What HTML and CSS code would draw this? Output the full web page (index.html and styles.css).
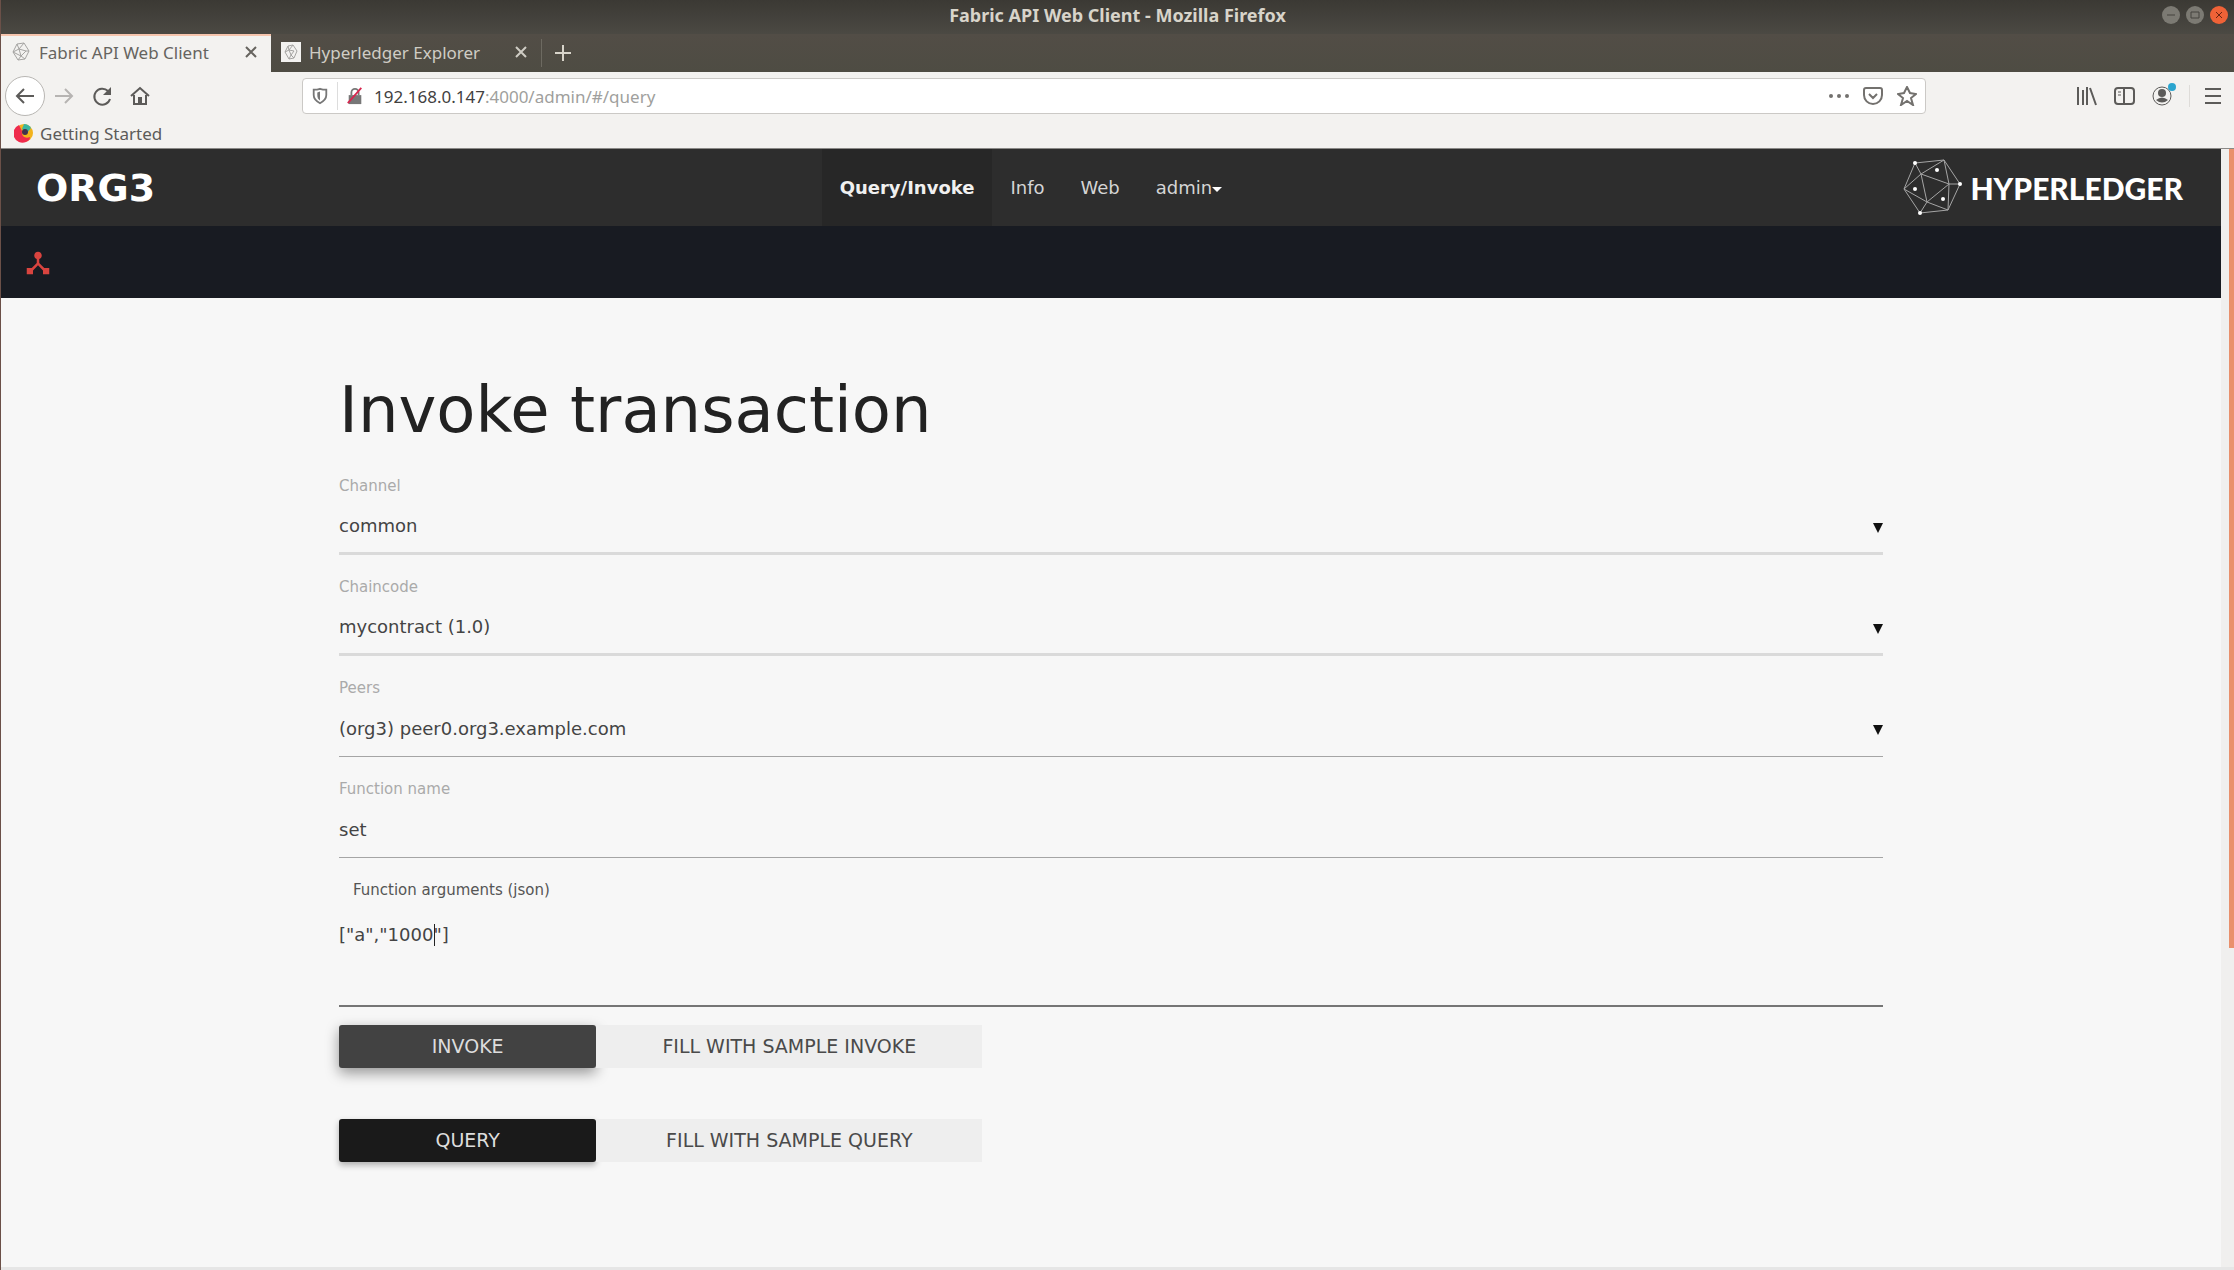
FILE: index.html
```html
<!doctype html>
<html lang="en">
<head>
    <meta charset="UTF-8">
    <meta name="viewport" content="width=device-width, initial-scale=1">
    <title>Fabric API Web Client</title>
    <link rel="stylesheet" href="styles.css">
</head>
<body>
<!-- browser window -->
<header class="window">
    <div class="titlebar">
        <span class="window-title">Fabric API Web Client - Mozilla Firefox</span>
        <div class="window-buttons">
            <button class="win-btn" aria-label="Minimize"><svg viewBox="0 0 18 18"><path d="M5 9h8"/></svg></button>
            <button class="win-btn" aria-label="Maximize"><svg viewBox="0 0 18 18"><path d="M5 6h8v6H5z"/></svg></button>
            <button class="win-btn win-close" aria-label="Close"><svg viewBox="0 0 18 18"><path d="M6 6l6 6M12 6l-6 6"/></svg></button>
        </div>
    </div>
    <div class="tabs">
        <div class="tab tab-active">
            <svg class="favicon" viewBox="0 0 20 20"><path d="M6 2l7-1 5 8-4 8-7 1-5-8zM6 2l2 5-6 3M13 1l-5 6 7 2-5 5-2-7M18 9h-3M10 14l-3 4M10 14l4 3M2 10l8 4"/></svg>
            <span class="tab-text">Fabric API Web Client</span>
            <button class="tab-btn" aria-label="Close tab"><svg viewBox="0 0 14 14"><path d="M2 2l10 10M12 2L2 12"/></svg></button>
        </div>
        <div class="tab">
            <svg class="favicon favicon-box" viewBox="0 0 20 20"><path d="M7 4l5-1 4 6-3 7-5 1-4-7zM7 4l1 4-4 2M12 3L8 8l5 1-3 4-2-5M10 13l-2 4M10 13l3 3"/></svg>
            <span class="tab-text">Hyperledger Explorer</span>
            <button class="tab-btn" aria-label="Close tab"><svg viewBox="0 0 14 14"><path d="M2 2l10 10M12 2L2 12"/></svg></button>
        </div>
        <button class="new-tab" aria-label="New tab"><svg viewBox="0 0 18 18"><path d="M9 1v16M1 9h16"/></svg></button>
    </div>
    <div class="toolbar">
        <div class="nav-buttons">
            <button class="back" aria-label="Back"><svg viewBox="0 0 22 22"><path d="M20 11H3M10 4l-7 7 7 7"/></svg></button>
            <button class="tool forward" aria-label="Forward"><svg viewBox="0 0 22 22"><path d="M2 11h17M12 4l7 7-7 7"/></svg></button>
            <button class="tool" aria-label="Reload"><svg viewBox="0 0 22 22"><path d="M17 6a8 8 0 1 0 2 8"/><path class="solid" d="M20 2v8h-8z"/></svg></button>
            <button class="tool" aria-label="Home"><svg viewBox="0 0 22 22"><path d="M2 11l9-8 9 8M5 10v9h12v-9"/><path class="solid" d="M9 12h4v7H9z"/></svg></button>
        </div>
        <div class="urlbar">
            <svg class="url-icon" viewBox="0 0 20 20"><path d="M10 2c3 1 5 1 7 1v6c0 5-3 7-7 9-4-2-7-4-7-9V3c2 0 4 0 7-1z"/><path class="solid" d="M10 5v10c-2-1-3-3-3-6V6z"/></svg>
            <span class="url-line"></span>
            <svg class="url-icon lock" viewBox="0 0 20 20"><path d="M6 9V6a4 4 0 0 1 8 0v3"/><path class="solid" d="M3 9h14v10H3z"/><path class="strike" d="M2 18L17 1"/></svg>
            <p class="url"><b>192.168.0.147</b>:4000/admin/#/query</p>
            <div class="url-actions">
                <svg viewBox="0 0 20 20"><g class="solid"><circle cx="2" cy="10" r="2"/><circle cx="10" cy="10" r="2"/><circle cx="18" cy="10" r="2"/></g></svg>
                <svg viewBox="0 0 20 20"><path d="M3 2h14q2 0 2 2v5a9 9 0 0 1-18 0V4q0-2 2-2zM6 8l4 4 4-4"/></svg>
                <svg viewBox="0 0 20 20"><path d="M10 1l3 6 6 1-5 4 2 7-6-4-6 4 2-7-5-4 6-1z"/></svg>
            </div>
        </div>
        <div class="tools">
            <button class="tool" aria-label="Library"><svg viewBox="0 0 22 22"><path d="M3 2v18M8 5v15M12 2v18M15 3l6 17"/></svg></button>
            <button class="tool" aria-label="Sidebars"><svg viewBox="0 0 22 22"><rect x="2" y="3" width="19" height="16" rx="3"/><path d="M11 3v16"/><path class="thin" d="M5 7h3M5 10h3"/></svg></button>
            <button class="tool account" aria-label="Account"><svg viewBox="0 0 22 22"><circle class="thin" cx="11" cy="11" r="9"/><circle class="solid" cx="11" cy="8" r="4"/><path class="solid" d="M5 15q6-5 12 0-6 5-12 0z"/></svg><i class="badge"></i></button>
            <button class="tool menu" aria-label="Menu"><svg viewBox="0 0 22 22"><path d="M3 4h16M3 11h16M3 18h16"/></svg></button>
        </div>
    </div>
    <div class="bookmarks">
        <a class="bookmark" href="#"><svg class="fox" viewBox="0 0 20 20"><circle cx="10" cy="10" r="9" fill="#f2b31c"/><path d="M10 1a9 9 0 0 1 7 4l-4 5-5-4z" fill="#39b7a0"/><path d="M5 2a9 9 0 0 0 7 17c3-1 4-3 4-5-5 2-9-1-8-6z" fill="#ef2b4c"/><circle cx="11" cy="9" r="3" fill="#41324c"/></svg>Getting Started</a>
    </div>
</header>

<div class="viewport">
    <div class="page">
        <nav class="navbar">
            <a class="brand" href="#">ORG3</a>
            <ul class="menu-list">
                <li class="active"><a href="#">Query/Invoke</a></li>
                <li><a href="#">Info</a></li>
                <li><a href="#">Web</a></li>
                <li><a href="#">admin<span class="caret"></span></a></li>
            </ul>
            <a class="logo" href="#">
                <svg viewBox="0 0 60 60">
                    <path d="M13 5l29-3 16 24-12 26-28 3L2 31zM13 5l6 11L2 31l23 13 22-18-28-10 23-14 5 24h11M19 16l6 28-7 11M25 44l21 8 1-26"/>
                    <g class="dots"><circle cx="13" cy="5" r="2"/><circle cx="35" cy="12" r="2"/><circle cx="58" cy="26" r="2"/><circle cx="13" cy="31" r="2"/><circle cx="41" cy="41" r="2"/><circle cx="18" cy="55" r="2"/></g>
                </svg>
                HYPERLEDGER
            </a>
        </nav>
        <div class="subbar">
            <svg viewBox="0 0 24 24"><path d="M17 16l-4-4V8.800C14.200 8.400 15 7.300 15 6c0-1.700-1.300-3-3-3S9 4.300 9 6c0 1.300.8 2.400 2 2.800V12l-4 4H3v5h5v-3l4-4.200 4 4.200v3h5v-5h-4z"/></svg>
        </div>

        <main class="container">
            <h1>Invoke transaction</h1>
            <form>
                <div class="field select-field light">
                    <label for="channel">Channel</label>
                    <select id="channel"><option>common</option></select>
                </div>
                <div class="field select-field light">
                    <label for="chaincode">Chaincode</label>
                    <select id="chaincode"><option>mycontract (1.0)</option></select>
                </div>
                <div class="field select-field">
                    <label for="peers">Peers</label>
                    <select id="peers"><option>(org3) peer0.org3.example.com</option></select>
                </div>
                <div class="field">
                    <label for="fn">Function name</label>
                    <input id="fn" type="text" value="set">
                </div>
                <div class="field args">
                    <label for="args">Function arguments (json)</label>
                    <textarea id="args" spellcheck="false">["a","1000"]</textarea>
                    <i class="cursor"></i>
                </div>
                <div class="actions">
                    <button type="button" class="btn btn-invoke">INVOKE</button>
                    <button type="button" class="btn-flat">FILL WITH SAMPLE INVOKE</button>
                </div>
                <div class="actions">
                    <button type="button" class="btn">QUERY</button>
                    <button type="button" class="btn-flat">FILL WITH SAMPLE QUERY</button>
                </div>
            </form>
        </main>
    </div>
    <div class="scrollbar"><div class="thumb"></div></div>
</div>
</body>
</html>
```
FILE: styles.css
```css
*{
    box-sizing: border-box;
}
body{
    margin: 0;
    height: 100vh;
    display: flex;
    flex-direction: column;
    font-family: "DejaVu Sans", sans-serif;
    background: #f7f7f7;
    border-left: 1px solid #6b5048;
    overflow: hidden;
}
button{
    border: 0;
    padding: 0;
    background: none;
    font: inherit;
    color: inherit;
}
a{
    color: inherit;
    text-decoration: none;
}
svg{
    display: block;
    fill: none;
    stroke: currentColor;
    stroke-width: 2;
}
.solid{
    fill: currentColor;
    stroke: none;
}

/* browser window */
.window{
    font-family: "Noto Sans", sans-serif;
    font-size: 17px;
    color: #5c5b59;
    background: #f3f2f0;
    border-bottom: 1px solid #8a8987;
}
.titlebar{
    position: relative;
    display: flex;
    justify-content: center;
    align-items: center;
    height: 34px;
    padding-bottom: 4px;
    background: linear-gradient(#3b3934, #4b4943);
}
.window-title{
    font-size: 18px;
    font-weight: bold;
    color: #d8d4ca;
}
.window-buttons{
    position: absolute;
    right: 6px;
    top: 6px;
    display: flex;
    gap: 6px;
}
.win-btn{
    width: 18px;
    height: 18px;
    border-radius: 50%;
    background: #7c7a73;
    color: #45433e;
}
.win-btn svg{
    stroke-width: 1;
}
.win-close{
    background: #ef6237;
    color: #6c2411;
}
.tabs{
    display: flex;
    height: 38px;
    background: linear-gradient(#524d46, #4e4c43);
}
.tab{
    display: flex;
    align-items: center;
    width: 270px;
    padding: 0 13px 2px 10px;
    color: #cfccc4;
}
.tab-active{
    background: #f3f2f0;
    border-top: 2px solid #f6c5ae;
    padding-bottom: 4px;
    color: #66645f;
}
.favicon{
    width: 20px;
    height: 20px;
    margin-right: 8px;
    stroke: #a5a4a2;
    stroke-width: 1;
}
.favicon-box{
    background: #f3f2f0;
}
.tab-text{
    flex: 1;
}
.tab-btn svg{
    width: 14px;
    height: 14px;
}
.new-tab{
    align-self: center;
    height: 28px;
    padding-left: 12px;
    border-left: 1px solid #6d6a61;
    color: #d8d4ca;
}
.new-tab svg{
    width: 18px;
    height: 18px;
}
.toolbar{
    display: flex;
    align-items: center;
    height: 48px;
    padding: 0 10px 0 4px;
}
.nav-buttons{
    display: flex;
    align-items: center;
    gap: 16px;
    width: 297px;
}
.tool svg{
    width: 22px;
    height: 22px;
}
.back{
    display: flex;
    align-items: center;
    justify-content: center;
    width: 40px;
    height: 40px;
    margin-right: -8px;
    border: 1px solid #b8b6b3;
    border-radius: 50%;
    background: #fff;
}
.back svg{
    width: 22px;
    height: 22px;
}
.forward{
    color: #b6b4b2;
}
.urlbar{
    flex: 1;
    display: flex;
    align-items: center;
    height: 36px;
    padding: 0 8px;
    border: 1px solid #cbc9c6;
    border-radius: 4px;
    background: #fff;
}
.url-icon{
    width: 18px;
    height: 18px;
    color: #777;
}
.url-line{
    height: 28px;
    margin: 0 8px;
    border-left: 1px solid #ddd;
}
.lock .strike{
    stroke: #d7264e;
    stroke-width: 2;
}
.url{
    flex: 1;
    margin: 0 0 0 10px;
    color: #a09f9d;
}
.url b{
    font-weight: normal;
    color: #42413f;
}
.url-actions{
    display: flex;
    gap: 14px;
}
.url-actions svg{
    width: 20px;
    height: 20px;
    color: #73716e;
}
.tools{
    display: flex;
    gap: 16px;
    padding-left: 149px;
}
.account{
    position: relative;
}
.badge{
    position: absolute;
    right: -3px;
    top: -2px;
    width: 8px;
    height: 8px;
    border-radius: 50%;
    background: #2ba5cf;
}
.menu{
    padding-left: 12px;
    border-left: 1px solid #dedcd9;
}
.thin{
    stroke-width: 1;
}
.bookmarks{
    height: 28px;
    padding-left: 13px;
}
.bookmark{
    display: flex;
    align-items: center;
    gap: 6px;
    height: 26px;
}
.fox{
    width: 20px;
    height: 20px;
    stroke: none;
}

/* web page */
.viewport{
    flex: 1;
    display: flex;
    border-bottom: 3px solid #e6e6e6;
}
.page{
    flex: 1;
}
.navbar{
    display: grid;
    grid-template-columns: 5fr auto 6fr;
    align-items: center;
    height: 77px;
    padding: 0 38px 0 35px;
    background: #2d2d2d;
    color: #fff;
}
.brand{
    font-size: 38px;
    font-weight: bold;
}
.menu-list{
    display: flex;
    height: 77px;
    margin: 0;
    padding: 0;
    list-style: none;
    font-size: 18px;
    line-height: 77px;
    color: #d5d5d5;
}
.menu-list li{
    padding: 0 18px;
}
.menu-list .active{
    background: #272727;
    color: #f0f0f0;
    font-weight: bold;
}
.caret{
    display: inline-block;
    vertical-align: middle;
    border: 5px solid transparent;
    border-top-color: #fff;
    border-bottom: 0;
}
.logo{
    justify-self: end;
    display: flex;
    align-items: center;
    gap: 8px;
    font-family: Lato, sans-serif;
    font-size: 30px;
    font-weight: 900;
}
.logo svg{
    width: 60px;
    height: 60px;
    stroke: #a5a5a5;
    stroke-width: 1;
}
.logo .dots{
    fill: #fff;
    stroke: none;
}
.subbar{
    display: flex;
    align-items: center;
    height: 72px;
    padding: 2px 0 0 22px;
    background: #181b22;
}
.subbar svg{
    width: 30px;
    height: 30px;
    fill: #d9443f;
    stroke: none;
}
.container{
    width: 70%;
    margin: 0 auto;
    padding: 72px 5px 0;
}
h1{
    margin: 0 0 24px;
    font-size: 64px;
    font-weight: normal;
    line-height: 80px;
    color: #222;
}
.field{
    position: relative;
    height: 101px;
}
.field label{
    display: block;
    font-size: 15px;
    line-height: 24px;
    color: #aaa;
}
.field select,
.field input,
.field textarea{
    display: block;
    width: 100%;
    height: 57px;
    padding: 0;
    border: 0;
    border-bottom: 1px solid #a5a5a5;
    border-radius: 0;
    outline: none;
    background: none;
    font: 18px "DejaVu Sans", sans-serif;
    color: #444;
    appearance: none;
}
.light select{
    border-bottom: 3px solid #dadada;
}
.select-field::after{
    content: "";
    position: absolute;
    right: 0;
    top: 49px;
    border: 5px solid transparent;
    border-top: 10px solid #111;
    border-bottom: 0;
    pointer-events: none;
}
.field.args{
    height: 147px;
}
.args label{
    padding-left: 14px;
    color: #555;
}
.field textarea{
    height: 105px;
    padding-top: 22px;
    border-bottom: 2px solid #757575;
    resize: none;
}
.cursor{
    position: absolute;
    left: 95px;
    top: 46px;
    height: 22px;
    border-left: 1px solid #222;
}
.actions{
    display: flex;
    margin-bottom: 51px;
    font-size: 19px;
    line-height: 43px;
}
.btn{
    width: 16.666%;
    border-radius: 3px;
    background: #1a1a1a;
    color: #ddd;
    box-shadow: 0 3px 6px rgba(0, 0, 0, .3);
}
.btn-invoke{
    background: #424242;
    box-shadow: 0 5px 14px rgba(0, 0, 0, .4);
}
.btn-flat{
    width: 25%;
    background: #eeeeee;
    color: #4a4a4a;
}
.scrollbar{
    width: 13px;
    padding-left: 8px;
    background: #f0efee;
}
.thumb{
    height: 71.5%;
    background: #e9906c;
}
```
